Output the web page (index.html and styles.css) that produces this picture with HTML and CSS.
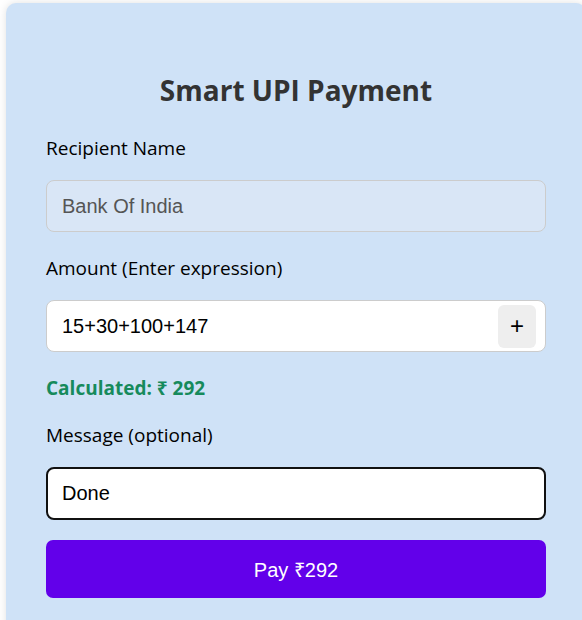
FILE: index.html
```html
<!DOCTYPE html>
<html>
<head>
<meta charset="utf-8">
<link rel="stylesheet" href="styles.css">
</head>
<body>
<div class="card">
  <h2 class="title">Smart UPI Payment</h2>
  <label class="label">Recipient Name</label>
  <div class="field field-readonly">Bank Of India</div>
  <label class="label label-gap">Amount (Enter expression)</label>
  <div class="field field-amount">
    <span>15+30+100+147</span>
    <span class="plus">+</span>
  </div>
  <div class="calc">Calculated: ₹ 292</div>
  <label class="label">Message (optional)</label>
  <div class="field field-focus">Done</div>
  <button class="pay">Pay ₹292</button>
</div>
</body>
</html>
```
FILE: styles.css
```css
html, body {
  margin: 0;
  padding: 0;
  background: #ffffff;
  overflow: hidden;
}
body {
  font-family: "Open Sans", "Noto Sans", sans-serif;
  color: #000;
}
.card {
  box-sizing: border-box;
  width: 580px;
  margin: 3px 0 0 6px;
  padding: 30px 40px 40px;
  background: #cfe2f7;
  border-radius: 10px;
  box-shadow: 0 0 8px rgba(0, 0, 0, 0.12);
}
.title {
  margin: 38px 0 27px;
  text-align: center;
  font-size: 28px;
  line-height: 38px;
  font-weight: 700;
  color: #333333;
}
.label {
  display: block;
  font-size: 19px;
  line-height: 24px;
  margin-bottom: 20px;
}
.label-gap {
  margin-top: 24px;
}
.field {
  box-sizing: border-box;
  height: 52px;
  display: flex;
  align-items: center;
  padding: 0 15px;
  background: #ffffff;
  border: 1px solid #cccccc;
  border-radius: 8px;
  font-family: "Liberation Sans", Arial, sans-serif;
  font-size: 20px;
  color: #000;
}
.field-readonly {
  background: #d9e6f6;
  color: #555555;
}
.field-amount {
  justify-content: space-between;
  padding-right: 9px;
}
.plus {
  display: flex;
  align-items: center;
  justify-content: center;
  width: 38px;
  height: 43px;
  background: #eeeeee;
  border-radius: 6px;
  font-size: 24px;
}
.calc {
  margin: 24px 0 23px;
  font-size: 19px;
  line-height: 24px;
  font-weight: 700;
  color: #168a5c;
}
.field-focus {
  height: 53px;
  border: 2px solid #111111;
  padding-left: 14px;
}
.pay {
  display: block;
  width: 100%;
  height: 58px;
  margin-top: 20px;
  border: none;
  border-radius: 7px;
  background: #6200ea;
  color: #ffffff;
  font-family: "Liberation Sans", Arial, sans-serif;
  font-size: 20px;
}
```
